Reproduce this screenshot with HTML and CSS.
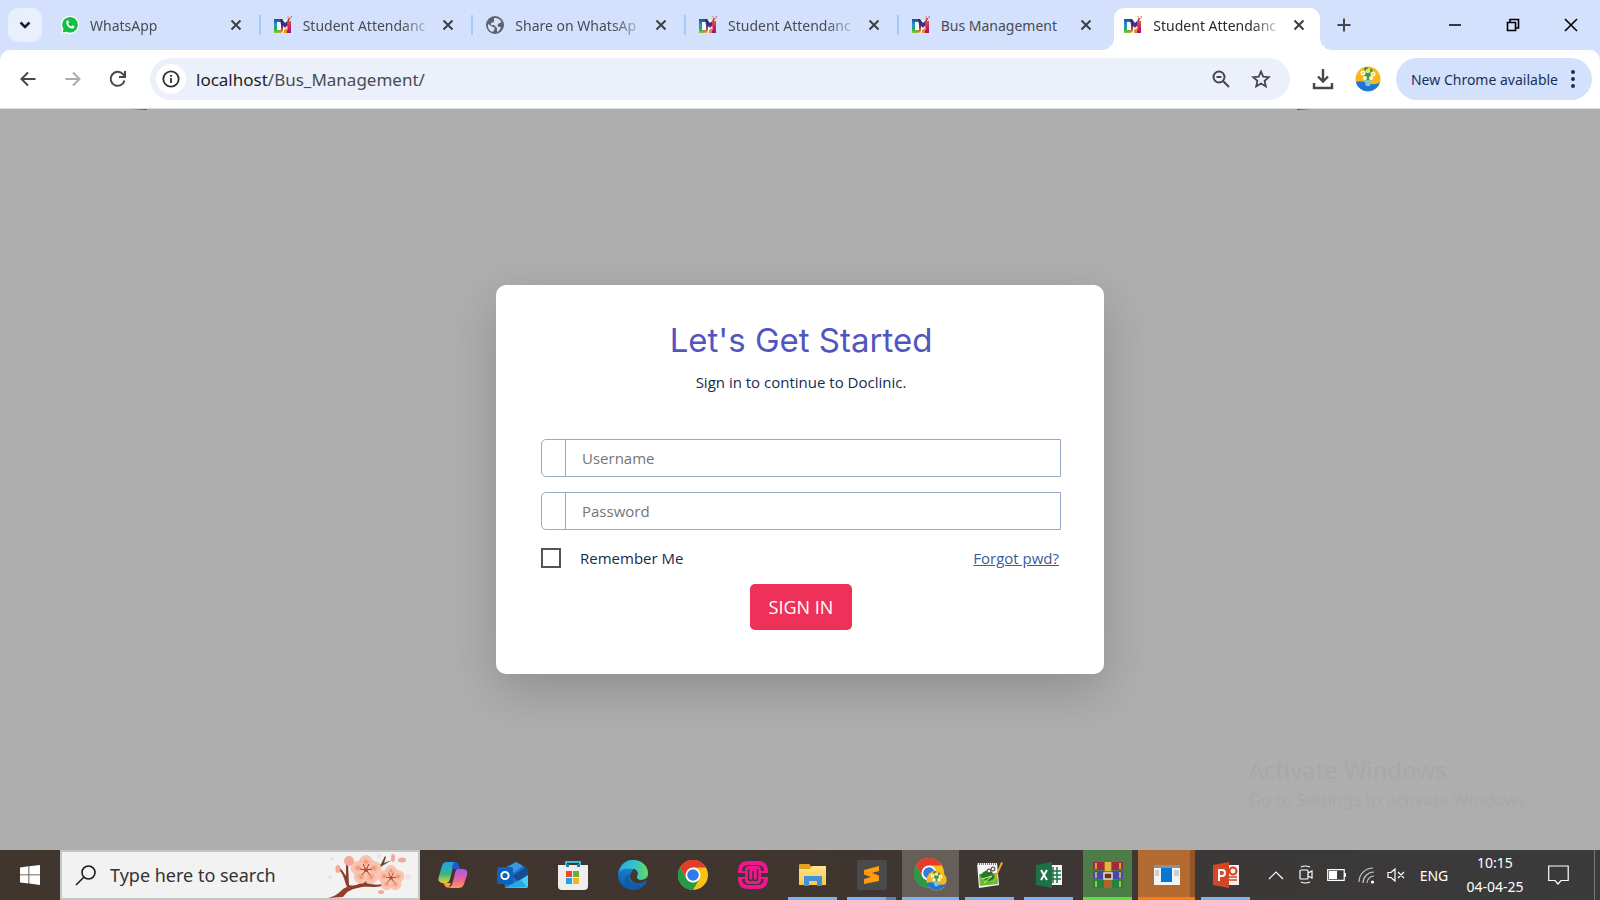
FILE: index.html
```html
<!DOCTYPE html>
<html lang="en">
<head>
<meta charset="utf-8">
<title>Student Attendance</title>
<link rel="stylesheet" href="styles.css">
</head>
<body>
<svg class="defs" aria-hidden="true">
  <defs>
    <linearGradient id="rainL" x1="0" x2="0" y1="0" y2="1"><stop offset="0" stop-color="#1b4fa3"/><stop offset=".4" stop-color="#1d9bd0"/><stop offset=".7" stop-color="#2aa84e"/><stop offset="1" stop-color="#8cc63a"/></linearGradient>
    <linearGradient id="rainM" x1="0" x2="0" y1="0" y2="1"><stop offset="0" stop-color="#1e2f72"/><stop offset=".5" stop-color="#5a2a80"/><stop offset="1" stop-color="#f2a51e"/></linearGradient>
    <linearGradient id="rainR" x1="0" x2="0" y1="0" y2="1"><stop offset="0" stop-color="#e4512b"/><stop offset=".5" stop-color="#d41f5c"/><stop offset="1" stop-color="#8a1a7d"/></linearGradient>
    <linearGradient id="cpA" x1="0" y1="0" x2="0" y2="1"><stop offset="0" stop-color="#1da3e8"/><stop offset=".55" stop-color="#36b38a"/><stop offset="1" stop-color="#e7d02a"/></linearGradient>
    <linearGradient id="cpB" x1="0" y1="0" x2="0" y2="1"><stop offset="0" stop-color="#a55be8"/><stop offset=".55" stop-color="#ef5f9c"/><stop offset="1" stop-color="#fb9a55"/></linearGradient>
    <linearGradient id="edA" x1="0" y1="0" x2="1" y2="0"><stop offset="0" stop-color="#2aa9e0"/><stop offset=".55" stop-color="#35c3c8"/><stop offset="1" stop-color="#66dd55"/></linearGradient>
    <linearGradient id="edB" x1="0" y1="0" x2="0" y2="1"><stop offset="0" stop-color="#1b8fdc"/><stop offset="1" stop-color="#0d56a8"/></linearGradient>
    <linearGradient id="folder" x1="0" y1="0" x2="0" y2="1"><stop offset="0" stop-color="#ffe38f"/><stop offset="1" stop-color="#f9c846"/></linearGradient>
    <linearGradient id="branch" x1="0" y1="1" x2="1" y2="0"><stop offset="0" stop-color="#a03c2c"/><stop offset="1" stop-color="#6d3f2b"/></linearGradient>
    <radialGradient id="petal"><stop offset="0" stop-color="#f08a72"/><stop offset=".5" stop-color="#f9bda6"/><stop offset="1" stop-color="#fbcdb8"/></radialGradient>
    <symbol id="multi" viewBox="0 0 18 18">
      <path d="M1 4h15v12H1z" fill="#fff"/>
      <path d="M0 3h7v3H3v8h3v3H0z" fill="url(#rainL)"/>
      <path d="M6 3h2l3 4 3-3h1v4l-4 4-2-2v5l-2 2H5v-3h2V9z" fill="url(#rainM)"/>
      <path d="M13 5h4v12h-6v-3h2.500z" fill="url(#rainR)"/>
      <path d="M10 14l3-2v5h-3z" fill="#f08a1d"/>
      <circle cx="15" cy="3" r="1.300" fill="#e4512b"/><circle cx="17.200" cy="1" r=".8" fill="#d13b4b"/><circle cx="14" cy=".8" r=".8" fill="#e88"/>
    </symbol>
    <symbol id="cross" viewBox="0 0 12 12"><path d="M1.500 1.500l9 9m0-9l-9 9" stroke="currentColor" stroke-width="2" fill="none"/></symbol>
    <symbol id="chrome" viewBox="0 0 30 30">
      <circle cx="15" cy="15" r="15" fill="#fbc116"/>
      <path d="M2 7.500A15 15 0 0 1 28 7.500H15L8.500 18.700z" fill="#e33b2e"/>
      <path d="M2 7.500L8.500 18.700A7.500 7.500 0 0 0 21.500 18.700L15 30A15 15 0 0 1 2 7.500z" fill="#269a48"/>
      <circle cx="15" cy="15" r="7.500" fill="#fff"/><circle cx="15" cy="15" r="5.800" fill="#2f7be8"/>
    </symbol>
    <symbol id="avatar" viewBox="0 0 26 26">
      <circle cx="13" cy="13" r="12.500" fill="#f8b81c"/>
      <path d="M.8 16Q6 14 13 17t12-1A12.500 12.500 0 0 1 .8 16z" fill="#1c75dc"/>
      <path d="M9 13h8l-2 7h-4z" fill="#8fc6b0"/>
      <g fill="#3e9a49"><circle cx="11" cy="3" r="2"/><circle cx="16" cy="5" r="2"/><circle cx="13" cy="10" r="4"/></g>
      <g fill="#fff8cf"><circle cx="8" cy="7" r="2.500"/><circle cx="13" cy="5" r="2"/><circle cx="18" cy="8" r="2.500"/><circle cx="10" cy="12" r="2"/><circle cx="16" cy="12" r="2"/></g>
      <g fill="#f3cf3b"><circle cx="8" cy="7" r="1"/><circle cx="18" cy="8" r="1"/><circle cx="13" cy="5" r="1"/></g>
    </symbol>
    <symbol id="flower" viewBox="-15 -15 30 30">
      <g fill="url(#petal)" stroke="#f0a993" stroke-width=".6"><ellipse cx="0" cy="-8" rx="6.500" ry="6.500"/><ellipse cx="8" cy="-2" rx="7" ry="6.500"/><ellipse cx="5" cy="7" rx="6.500" ry="6.500"/><ellipse cx="-5" cy="7" rx="6.500" ry="6.500"/><ellipse cx="-8" cy="-2" rx="7" ry="6.500"/></g>
      <path d="M0 0l-3-6M0 0l3-6M0 0l6-1M0 0l4 5M0 0l-4 5M0 0l-6-1" stroke="#a33a2c" stroke-width="1"/><circle r="2" fill="#b9482f"/>
    </symbol>
  </defs>
</svg>

<div class="screen">
  <header class="browser">
    <div class="tabstrip">
      <button class="tab-search" aria-label="Search tabs"><svg width="14" height="10" viewBox="0 0 14 10"><path d="M2.500 2.500L7 7l4.500-4.500" fill="none" stroke="#1f1f1f" stroke-width="2.500"/></svg></button>
      <nav class="tabs">
        <div class="tab"><svg class="favicon" viewBox="0 0 18 18"><path d="M0 18l1.200-4.500A9 9 0 1 1 5 17z" fill="#fff"/><path d="M1.500 16.500l1-3.500A7.800 7.800 0 1 1 5.500 15.700z" fill="#16bd45"/><path d="M6 4.500C3.500 7 8 13.500 12 12.500c1.500-.5 1.800-2 1.300-2.300L11.300 9.200l-1.200 1.200C8.500 10 7.500 8.500 7.200 7.700L8 6.500l-.8-2z" fill="#fff"/></svg><span class="tab-label">WhatsApp</span><button class="tab-close" aria-label="Close"><svg><use href="#cross"/></svg></button></div>
        <div class="tab"><svg class="favicon"><use href="#multi"/></svg><span class="tab-label">Student Attendanc</span><button class="tab-close" aria-label="Close"><svg><use href="#cross"/></svg></button></div>
        <div class="tab"><svg class="favicon" viewBox="0 0 18 18"><circle cx="9" cy="9" r="9" fill="#5f6368"/><path d="M2 8l5 3c2 0 2 2 1 3l-1 2C3 15 1.500 12 2 8zM8 2c3-.5 6 1 7.500 4L12 8c-1 2 0 3 1.500 3L15 11c-1 3-2 4-4 5l0-4-3-3H5V7l3-1z" fill="#d3e1fc"/></svg><span class="tab-label">Share on WhatsAp</span><button class="tab-close" aria-label="Close"><svg><use href="#cross"/></svg></button></div>
        <div class="tab"><svg class="favicon"><use href="#multi"/></svg><span class="tab-label">Student Attendanc</span><button class="tab-close" aria-label="Close"><svg><use href="#cross"/></svg></button></div>
        <div class="tab"><svg class="favicon"><use href="#multi"/></svg><span class="tab-label short">Bus Management</span><button class="tab-close" aria-label="Close"><svg><use href="#cross"/></svg></button></div>
        <div class="tab active"><svg class="favicon"><use href="#multi"/></svg><span class="tab-label">Student Attendanc</span><button class="tab-close" aria-label="Close"><svg><use href="#cross"/></svg></button></div>
      </nav>
      <div class="window-tools">
        <button class="new-tab" aria-label="New tab"><svg width="14" height="14" viewBox="0 0 14 14"><path d="M7 .5v13M.5 7h13" stroke="#474747" stroke-width="2"/></svg></button>
        <div class="window-controls">
          <button aria-label="Minimize"><svg width="14" height="14" viewBox="0 0 14 14"><path d="M1 7h12" stroke="#000" stroke-width="1.500"/></svg></button>
          <button aria-label="Restore"><svg width="14" height="14" viewBox="0 0 14 14" fill="none" stroke="#000" stroke-width="1.600"><path d="M1.500 4.500h8v8h-8zM4 4V1.500h8.500V10H10"/></svg></button>
          <button aria-label="Close window"><svg width="14" height="14" viewBox="0 0 14 14"><path d="M1 1l12 12M13 1L1 13" stroke="#000" stroke-width="1.600"/></svg></button>
        </div>
      </div>
    </div>
    <div class="toolbar">
      <button class="nav" aria-label="Back"><svg width="16" height="16" viewBox="0 0 16 16" fill="none" stroke="#474747" stroke-width="2"><path d="M15.500 8H2M8 1.500L1.500 8 8 14.500"/></svg></button>
      <button class="nav" aria-label="Forward"><svg width="16" height="16" viewBox="0 0 16 16" fill="none" stroke="#ababab" stroke-width="2"><path d="M.5 8H14M8 1.500L14.500 8 8 14.500"/></svg></button>
      <button class="nav" aria-label="Reload"><svg width="18" height="18" viewBox="0 0 18 18" fill="none" stroke="#474747" stroke-width="2"><path d="M15.500 10.500A7 7 0 1 1 14 4.200L16 6.500M16 1v6h-6"/></svg></button>
      <div class="omnibox">
        <button class="site-info" aria-label="Site information"><svg width="18" height="18" viewBox="0 0 18 18"><circle cx="9" cy="9" r="7.700" fill="none" stroke="#303030" stroke-width="1.800"/><path d="M9 8v5M9 5v1.800" stroke="#303030" stroke-width="1.800"/></svg></button>
        <div class="url"><b>localhost</b>/Bus_Management/</div>
        <button class="omni-btn" aria-label="Zoom"><svg width="18" height="18" viewBox="0 0 18 18" fill="none" stroke="#474747" stroke-width="2"><circle cx="7" cy="7" r="5.500"/><path d="M11 11l6 6M4.500 7h5"/></svg></button>
        <button class="omni-btn" aria-label="Bookmark"><svg width="20" height="20" viewBox="0 0 20 20" fill="none" stroke="#474747" stroke-width="1.800"><path d="M10 2.500l2.200 5.200 5.600.5-4.200 3.700 1.200 5.500L10 14.500l-4.800 2.900 1.200-5.500-4.200-3.700 5.600-.5z"/></svg></button>
      </div>
      <button class="bar-btn" aria-label="Downloads"><svg width="22" height="22" viewBox="0 0 22 22" fill="none" stroke="#474747" stroke-width="2.400"><path d="M11 1v12M6 8.500l5 5 5-5M2 15v5h18v-5"/></svg></button>
      <button class="bar-btn" aria-label="Profile"><svg width="26" height="26"><use href="#avatar"/></svg></button>
      <button class="update">New Chrome available<svg width="4" height="18" viewBox="0 0 4 18" fill="#1b2f5b"><circle cx="2" cy="2" r="2"/><circle cx="2" cy="9" r="2"/><circle cx="2" cy="16" r="2"/></svg></button>
    </div>
  </header>

  <main class="page">
    <form class="card">
      <h1>Let's Get Started</h1>
      <p class="lead">Sign in to continue to Doclinic.</p>
      <div class="field"><span class="addon"></span><input type="text" placeholder="Username" aria-label="Username"></div>
      <div class="field"><span class="addon"></span><input type="password" placeholder="Password" aria-label="Password"></div>
      <div class="options">
        <label class="remember" for="remember"><input type="checkbox" id="remember">Remember Me</label>
        <a href="#">Forgot pwd?</a>
      </div>
      <button type="button" class="sign-in">SIGN IN</button>
    </form>
    <div class="watermark"><div class="watermark-title">Activate Windows</div><div>Go to Settings to activate Windows.</div></div>
  </main>

  <footer class="taskbar">
    <button class="start" aria-label="Start"><svg width="20" height="20" viewBox="0 0 20 20" fill="#fff"><path d="M0 2.500L8.500 1.300V9.500H0zM9.300 1.200L20 0v9.500H9.300zM0 10.300h8.500v8.200L0 17.500zM9.300 10.300H20V20L9.300 18.600z"/></svg></button>
    <label class="search" for="search">
      <svg width="21" height="21" viewBox="0 0 21 21" fill="none" stroke="#1b1b1b" stroke-width="1.600"><circle cx="13.500" cy="7.500" r="6.500"/><path d="M9 12l-8 8"/></svg>
      <input id="search" type="text" placeholder="Type here to search">
      <svg class="blossom" width="84" height="44" viewBox="0 0 84 44">
        <path d="M0 44C14 40 12 35 19 33 16 26 16 20 10 15l2-1c3 3 4 5 6 8l0-13h2l1 22c6 2 12-1 18-7l14-14 4-8 1 1-2 6 8-3-10 6-16 17c8 2 12 2 16 1l0 2c-10 2-14 0-20 1-10 2-14 3-19 10z" fill="url(#branch)"/>
        <use href="#flower" x="22" y="1" width="32" height="30"/><use href="#flower" x="50" y="11" width="26" height="26"/>
        <g fill="#f6a894"><circle cx="21" cy="7" r="5"/><ellipse cx="10" cy="15" rx="2.500" ry="4"/><ellipse cx="65" cy="4" rx="2" ry="4"/><ellipse cx="74" cy="6" rx="4" ry="2.500"/><ellipse cx="53" cy="38" rx="3" ry="2"/></g>
        <g fill="#fbdcdc"><circle cx="2" cy="23" r="2"/><circle cx="51" cy="2" r="2"/><circle cx="80" cy="23" r="2.500"/><circle cx="4" cy="5" r="2"/></g>
      </svg>
    </label>
    <nav class="pinned">
      <button aria-label="Copilot"><svg width="30" height="28" viewBox="0 0 30 28"><path d="M9 1h10c-3 1-4 4-5 9l-2 8c-1 3-2 4-5 4H5c-5 0-5-4-4-7L4 5c1-3 2-4 5-4z" fill="url(#cpA)"/><path d="M17 1c4 0 4 4 5 7h-7c-2 0 0-7 2-7z" fill="#2358c9"/><path d="M20 8h5c4 0 5 3 4 6l-3 9c-1 3-3 4-6 4H10c3-1 4-3 5-7l2-8c1-3 1-4 3-4z" fill="url(#cpB)"/><path d="M5 22h8l-2 4c-3 2-4-2-6-4z" fill="#f6a23c"/></svg></button>
      <button aria-label="Outlook"><svg width="32" height="28" viewBox="0 0 32 28"><path d="M5 8L19 1l12 7v17a2 2 0 0 1-2 2H8z" fill="#1c70c8"/><path d="M7 8L19 1l7 4-17 12z" fill="#3c98de"/><path d="M15 15l14-9 2 2v6l-9 7z" fill="#164c92"/><path d="M31 14v11a2 2 0 0 1-2 2H8l15-8z" fill="#49cdf2"/><path d="M8 27l16-8 6 7z" fill="#29a8e4"/><rect x="0" y="6" width="16" height="17" rx="2" fill="#0c62bd"/><circle cx="8" cy="14.500" r="3.600" fill="none" stroke="#fff" stroke-width="2"/></svg></button>
      <button aria-label="Store"><svg width="30" height="30" viewBox="0 0 30 30"><path d="M8 7V2h14v5" fill="none" stroke="#3fb9e5" stroke-width="2"/><path d="M0 5h30v21a4 4 0 0 1-4 4H4a4 4 0 0 1-4-4z" fill="#eeeeef"/><path d="M8 4h3v3H8zM19 4h3v3h-3z" fill="#1f829e"/><path d="M8 11h6v6H8z" fill="#e94b26"/><path d="M15 11h6v6h-6z" fill="#6ab32e"/><path d="M8 18h6v6H8z" fill="#23a3e5"/><path d="M15 18h6v6h-6z" fill="#f6b51d"/></svg></button>
      <button aria-label="Edge"><svg width="30" height="30" viewBox="0 0 30 30"><circle cx="15" cy="15" r="15" fill="url(#edB)"/><path d="M1 12C3 3 9 0 15 0c9 0 15 6 15 13 0 5-4 7-7 7-4 0-5-2-4-4 2-3 0-7-5-7C8 8 4 9 1 12z" fill="url(#edA)"/><path d="M11 14c-3 7 3 13 10 12 3 0 6-2 7-4 0 3-6 8-12 8-9 0-13-11-5-16z" fill="#145aa5"/><path d="M19 16c2-3 0-7-4-7 0 3-4 4-3 8 1 5 7 8 14 5l4-3V17c-4 4-12 4-11-1z" fill="#403831"/></svg></button>
      <button aria-label="Chrome"><svg width="30" height="30"><use href="#chrome"/></svg></button>
      <button aria-label="WampServer"><svg width="30" height="28" viewBox="0 0 30 28" fill="none" stroke="#ef168f"><path d="M2 11C2 5 5 2 10 2h10c5 0 8 3 8 9M2 17c0 6 3 9 8 9h10c5 0 8-3 8-9" stroke-width="4"/><path d="M0 11h7M23 11h7M0 17h7M23 17h7" stroke-width="2"/><rect x="7" y="5" width="16" height="18" rx="4" fill="#ef168f" stroke="none"/><path d="M10.500 8v9q0 2.500 2.200 2.500T15 17V10v7q0 2.500 2.300 2.500t2.200-2.500V8" stroke="#403831" stroke-width="1.600"/></svg></button>
    </nav>
    <nav class="running">
      <button aria-label="File Explorer"><svg width="28" height="24" viewBox="0 0 28 24"><path d="M0 2a1 1 0 0 1 1-1h9l3 3h14v4H0z" fill="#e0a221"/><path d="M0 6h11l2-3h14v19H0z" fill="url(#folder)"/><path d="M5 23V13h18v10h-5v-5h-8v5z" fill="#3f92d8"/></svg></button>
      <button class="grouped" aria-label="Sublime Text"><svg width="30" height="30" viewBox="0 0 30 30"><rect width="30" height="30" rx="2" fill="#4a4a4a"/><path d="M7 10l15-4v5l-7 2 7 2.500v5.500L7 24v-5l7-2-7-2.500z" fill="#ff9c12"/></svg></button>
      <button class="current" aria-label="Chrome window"><svg width="33" height="34" viewBox="0 0 33 34"><use href="#chrome" width="30" height="30"/><use href="#avatar" x="12" y="12" width="21" height="21"/></svg></button>
      <button aria-label="Notepad++"><svg width="28" height="28" viewBox="0 0 28 28"><path d="M1 2l20 0 2 22-20 3z" fill="#f5f5f5"/><path d="M1 3h20" stroke="#777" stroke-width="2" stroke-dasharray="1 1"/><path d="M3 13l18-1 1 11-18 2z" fill="#69bd35"/><path d="M4 15q5-8 12-4l3 6q-6 5-10 2z" fill="#237c28"/><path d="M6 18l10-3M8 22l8-7" stroke="#d9f08b"/><circle cx="13" cy="10" r="2" fill="#eee" stroke="#333"/><circle cx="17" cy="8" r="2" fill="#eee" stroke="#333"/><path d="M27 2l-8 17-2 3 1-4 7-17z" fill="#e8a532"/></svg></button>
      <button aria-label="Excel"><svg width="26" height="26" viewBox="0 0 26 26"><path d="M13 3h13v20H13z" fill="#f4f8f5"/><path d="M17 5v16M21 5v16M15 9h10M15 13h10M15 17h10" stroke="#207347" stroke-width="1.500"/><path d="M0 3l16-3v26L0 23z" fill="#1e7145"/><path d="M5 8l6 10M11 8L5 18" stroke="#fff" stroke-width="2"/></svg></button>
      <button class="green" aria-label="WinRAR"><svg width="30" height="26" viewBox="0 0 30 26"><rect y="0" width="30" height="8" rx="1" fill="#a52843"/><rect y="9" width="30" height="8" rx="1" fill="#494aa8"/><rect y="18" width="30" height="8" rx="1" fill="#20843c"/><path d="M3 1v6M3 10v6M3 19v6M27 1v6M27 10v6M27 19v6" stroke="#e5c44b" stroke-width="1.500"/><path d="M11 0h8v26h-8z" fill="#ad6427"/><path d="M12 0h6v9h-6z" fill="#e6b33b"/><rect x="11" y="11" width="8" height="6" fill="#673516" stroke="#ddd" stroke-width="1.500"/></svg></button>
      <button class="orange" aria-label="Application window"><svg width="26" height="20" viewBox="0 0 26 20"><path d="M0 0h26v20H0z" fill="#f3f3f3"/><path d="M0 0h26v3H0z" fill="#8b9197"/><path d="M7 3h11v14H7z" fill="#0877d1"/><path d="M1 6h4M1 8h4M1 10h4M20 6h5M20 8h5M20 10h5" stroke="#aaa"/></svg></button>
      <button aria-label="PowerPoint"><svg width="26" height="26" viewBox="0 0 26 26"><path d="M13 3h13v20H13z" fill="#f9efec"/><circle cx="20" cy="9" r="3.500" fill="none" stroke="#d04424" stroke-width="2"/><path d="M16 15h8M16 18h8" stroke="#d04424" stroke-width="1.500"/><path d="M0 3l16-3v26L0 23z" fill="#d24726"/><path d="M6 19V8h3q3 0 3 3t-3 3H6" stroke="#fff" stroke-width="2" fill="none"/></svg></button>
    </nav>
    <div class="tray">
      <button aria-label="Hidden icons"><svg width="16" height="10" viewBox="0 0 16 10"><path d="M1 9l7-7 7 7"/></svg></button>
      <button aria-label="Meet Now"><svg width="16" height="20" viewBox="0 0 16 20"><rect x="2" y="5" width="8" height="9" rx="1"/><path d="M10 8l4-2v7l-4-2M3 2q4-2 9 0M3 17q4 2 9 0"/></svg></button>
      <button aria-label="Battery"><svg width="19" height="12" viewBox="0 0 19 12"><path d="M.7.7h16.500v10.600H.7zM18.300 4v4"/><path d="M2 2h8v8H2z" fill="#fff" stroke="none"/></svg></button>
      <button aria-label="Network"><svg width="17" height="17" viewBox="0 0 17 17"><path d="M1 15A14 14 0 0 1 15 1M5 16A11 11 0 0 1 16 5M9 16a7 7 0 0 1 7-7" opacity=".7"/><circle cx="14.500" cy="15" r="1" fill="#fff"/></svg></button>
      <button aria-label="Volume muted"><svg width="18" height="14" viewBox="0 0 18 14"><path d="M1 4.500h3L8 1v12L4 9.500H1zM11 4l6 6M17 4l-6 6"/></svg></button>
      <button class="lang">ENG</button>
      <button class="clock"><span>10:15</span><span>04-04-25</span></button>
      <button class="notify" aria-label="Notifications"><svg width="21" height="21" viewBox="0 0 21 21"><path d="M.7 1h19.500v14.500H13L10 19l-3-3.500H.7z"/></svg></button>
    </div>
  </footer>
</div>
</body>
</html>
```
FILE: styles.css
```css
* { box-sizing: border-box; }
body { margin: 0; font-family: "Noto Sans", "Open Sans", sans-serif; }
button { border: 0; padding: 0; background: none; font: inherit; color: inherit; display: flex; align-items: center; justify-content: center; }
svg { display: block; flex: none; }
.defs { position: absolute; width: 0; height: 0; }
.screen { display: flex; flex-direction: column; min-height: 100vh; }

.browser { background: #d3e1fc; }
.tabstrip { display: flex; height: 50px; padding-left: 8px; }
.tab-search { width: 34px; height: 34px; margin: 8px 6px 0 0; border-radius: 10px; background: #e9f0fd; flex: none; }
.tabs { flex: 1; min-width: 0; display: grid; grid-template-columns: repeat(6, minmax(0, 1fr)); }
.tab { position: relative; display: flex; align-items: center; padding: 0 13px; color: #474c55; font-size: 14px; }
.favicon { width: 18px; height: 18px; margin-right: 11px; }
.tab-label { flex: 1; min-width: 0; overflow: hidden; white-space: nowrap; line-height: 24px; margin: 2px 4px 0 0; -webkit-mask-image: linear-gradient(to right, #000 98px, transparent 132px); mask-image: linear-gradient(to right, #000 98px, transparent 132px); }
.short { -webkit-mask-image: none; mask-image: none; }
.tab-close { width: 24px; height: 24px; color: #3c3f44; flex: none; }
.tab-close svg { width: 12px; height: 12px; }
.tab:nth-child(-n+4)::after { content: ""; position: absolute; right: 0; top: 15px; width: 2px; height: 20px; background: #a8c7fa; }
.active { color: #2a2a2a; isolation: isolate; }
.active::before { content: ""; position: absolute; z-index: -1; inset: 8px 4px 0 3px; background: #fff; border-radius: 10px 10px 0 0; }
.active::after { content: ""; position: absolute; z-index: -1; left: -9px; right: -8px; bottom: 0; height: 12px; background: radial-gradient(circle at 0 0, transparent 12px, #fff 12px) left / 12px 12px no-repeat, radial-gradient(circle at 100% 0, transparent 12px, #fff 12px) right / 12px 12px no-repeat; }
.window-tools { flex: 0 0 276px; display: flex; justify-content: space-between; }
.new-tab { width: 40px; }
.window-controls { display: flex; }
.window-controls button { width: 58px; }

.toolbar { display: flex; align-items: center; height: 59px; padding: 0 8px 0 5px; background: #fff; border-radius: 10px 10px 0 0; border-bottom: 1px solid #d9dce0; }
.nav { width: 45px; height: 42px; flex: none; }
.omnibox { flex: 1; min-width: 0; height: 42px; margin-left: 10px; padding: 0 9px 0 6px; display: flex; align-items: center; border-radius: 21px; background: #ebf0fa; }
.site-info { width: 30px; height: 30px; border-radius: 50%; background: #fff; }
.url { flex: 1; margin-left: 10px; font-size: 17px; color: #474c50; }
.url b { font-weight: 400; color: #1f1f1f; }
.omni-btn { width: 40px; height: 40px; }
.bar-btn { width: 45px; height: 42px; flex: none; }
.omnibox + .bar-btn { margin-left: 11px; }
.update { flex: none; height: 42px; margin-left: 5px; padding: 0 17px 0 15px; gap: 13px; border-radius: 21px; background: #d3e1fc; color: #1b2f5b; font-size: 14px; }

.page { position: relative; flex: 1; display: flex; align-items: center; justify-content: center; background: linear-gradient(90deg, transparent, #405a8c) 132px 0 / 15px 1px no-repeat, linear-gradient(90deg, #555, transparent) 1297px 0 / 14px 1px no-repeat, #aeaeae; }
.card { width: 38%; min-width: 420px; display: flex; flex-direction: column; padding: 35px 43px 44px 45px; background: #fff; border-radius: 10px; box-shadow: 0 16px 48px rgba(0, 0, 0, .18); font-family: "Open Sans", "Noto Sans", sans-serif; color: #172b4c; }
.card h1 { margin: 0; text-align: center; font: 400 33px/40px Inter, Roboto, sans-serif; color: #5156be; }
.lead { margin: 10px 0 45px; text-align: center; font-size: 15px; line-height: 24px; }
.field { display: flex; height: 38px; margin-bottom: 15px; border: 1px solid #98abc4; border-radius: 5px 0 0 5px; }
.addon { width: 24px; border-right: 1px solid #98abc4; }
.field input { flex: 1; min-width: 0; border: 0; padding: 0 16px; background: none; font: inherit; font-size: 15px; }
.field input::placeholder { color: #757575; opacity: 1; }
.options { display: flex; justify-content: space-between; align-items: center; height: 26px; margin-bottom: 13px; padding-right: 2px; font-size: 15px; }
.remember { display: flex; align-items: center; gap: 19px; }
.remember input { appearance: none; width: 20px; height: 20px; margin: 0; border: 2px solid #555; }
.options a { color: #3e5c96; }
.sign-in { align-self: center; width: 102px; height: 46px; border-radius: 5px; background: #ee3158; color: #fff; font-size: 18px; }
.watermark { position: absolute; right: 70px; bottom: 36px; font-size: 17px; line-height: 28px; color: #a8a8a8; }
.watermark-title { font-size: 24px; line-height: 32px; }

.taskbar { display: flex; height: 50px; background: linear-gradient(90deg, #40362e, #40352f 50%, #3b3837 75%, #3b3b3c); color: #fff; }
.start { width: 60px; flex: none; }
.search { flex: 0 1 360px; min-width: 160px; display: flex; align-items: center; padding-left: 13px; background: #f2f2f2; border: 2px solid #c5c5c5; }
.search input { flex: 1; min-width: 0; margin-left: 14px; padding: 0; border: 0; background: none; font: 18px "Noto Sans", sans-serif; }
.search input::placeholder { color: #333; opacity: 1; }
.blossom { margin: 2px 6px 0 0; }
.pinned { display: flex; margin-left: 3px; }
.pinned button { width: 60px; }
.running { display: flex; }
.running button { width: 59px; border: solid transparent; border-width: 0 5px; background: linear-gradient(#76b4f4, #76b4f4) bottom / 100% 3px no-repeat padding-box; }
.running .grouped { background: linear-gradient(90deg, #76b4f4 80%, #5585b7 80%) bottom / 100% 3px no-repeat padding-box; }
.running .current { border-width: 0 1px; background-color: #655e59; }
.running .green { background: linear-gradient(#56e33a, #56e33a) bottom / 100% 3px no-repeat padding-box, #4e7c47 padding-box; }
.running .orange { border-width: 0 1px; background: linear-gradient(#ff7a0d, #ff7a0d) bottom / 100% 3px no-repeat padding-box, linear-gradient(90deg, #b36a30 91%, #935527 91%) padding-box; }
.tray { display: flex; margin-left: auto; padding-right: 5px; }
.tray button { width: 30px; }
.tray svg { fill: none; stroke: #fff; stroke-width: 1.200; }
.tray .lang { width: 46px; font-size: 14px; }
.tray .clock { width: 76px; flex-direction: column; font-size: 14px; line-height: 24px; }
.tray .notify { width: 62px; border-right: 1px solid #777; padding-right: 10px; }
```
